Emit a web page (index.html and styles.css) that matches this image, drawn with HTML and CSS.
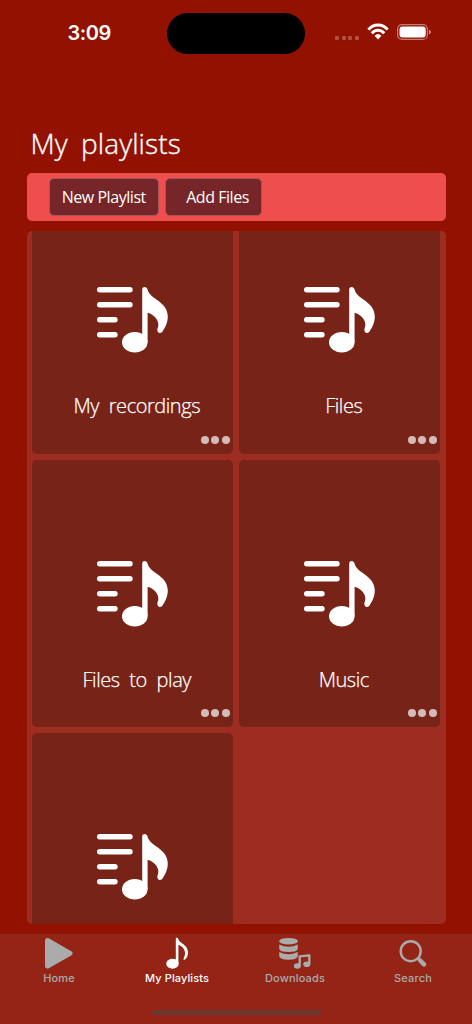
FILE: index.html
```html
<!DOCTYPE html>
<html lang="en">
<head>
<meta charset="utf-8">
<meta name="viewport" content="width=device-width, initial-scale=1">
<title>My playlists</title>
<link rel="stylesheet" href="styles.css">
</head>
<body>
<svg class="defs" aria-hidden="true">
  <symbol id="playlist" viewBox="0 0 72 68">
    <g fill="none" stroke="currentColor" stroke-width="5.4" stroke-linecap="round">
      <path d="M3.7 3.7H34M3.7 18.7H34M3.7 33.8H19M3.7 48.8H19"/>
    </g>
    <ellipse cx="38.8" cy="56.2" rx="12.8" ry="10.3" fill="currentColor"/>
    <path fill="currentColor" d="M46.2 3.5C46.2 .2 51 .2 51.6 3.8C54 13.500 71.800 15.500 71.800 30.500C71.800 37 69 41.500 66.500 45.500C64.500 48.500 60.500 46.500 61.500 42.400C64.500 37.500 60 29 51.600 26.800V56H46.200Z"/>
  </symbol>
</svg>
<div class="screen">
  <header class="status">
    <time class="clock">3:09</time>
    <div class="island"></div>
    <div class="indicators">
      <div class="signal"><i></i><i></i><i></i><i></i></div>
      <svg class="wifi" viewBox="0 0 22 17">
        <g fill="none" stroke="#fff" stroke-width="3">
          <path d="M1.400 6.600C6.500 .500 15.500 .500 20.600 6.600"/>
          <path d="M4.800 10.300C8.200 6.300 13.800 6.300 17.200 10.300"/>
        </g>
        <path fill="#fff" d="M7.500 12.700Q11 9.400 14.500 12.700L11 16.500Z"/>
      </svg>
      <svg class="battery" viewBox="0 0 34 16">
        <rect x=".6" y=".6" width="29.800" height="14.800" rx="4.500" fill="none" stroke="#fff" stroke-opacity=".45" stroke-width="1.200"/>
        <rect x="2.500" y="2.500" width="26.200" height="11" rx="3" fill="#fff"/>
        <path d="M32 5.500Q34 6.500 34 8T32 10.500Z" fill="#fff" fill-opacity=".5"/>
      </svg>
    </div>
  </header>
  <main class="content">
    <h1 class="title">My playlists</h1>
    <div class="toolbar">
      <button class="action new">New Playlist</button>
      <button class="action add">Add Files</button>
    </div>
    <section class="panel">
      <div class="grid">
        <article class="card"><svg class="art"><use href="#playlist"/></svg><h2 class="name">My recordings</h2><div class="more"><i></i><i></i><i></i></div></article>
        <article class="card"><svg class="art"><use href="#playlist"/></svg><h2 class="name">Files</h2><div class="more"><i></i><i></i><i></i></div></article>
        <article class="card"><svg class="art"><use href="#playlist"/></svg><h2 class="name">Files to play</h2><div class="more"><i></i><i></i><i></i></div></article>
        <article class="card"><svg class="art"><use href="#playlist"/></svg><h2 class="name">Music</h2><div class="more"><i></i><i></i><i></i></div></article>
        <article class="card"><svg class="art"><use href="#playlist"/></svg></article>
      </div>
    </section>
  </main>
  <nav class="tabs">
    <a class="tab">
      <svg class="tab-icon" viewBox="0 0 36 36"><path d="M6.500 5.500L29 18.300L6.500 31Z" fill="currentColor" stroke="currentColor" stroke-width="5" stroke-linejoin="round"/></svg>
      <span>Home</span>
    </a>
    <a class="tab active">
      <svg class="tab-icon" viewBox="0 0 36 36"><ellipse cx="13.500" cy="28.700" rx="6.200" ry="5" fill="currentColor"/><path fill="currentColor" d="M16.800 4C16.800 2.300 19 2.300 19.300 4C20 8.300 29 9.500 29 17.500C29 20.500 27.800 22.800 26 24.600C25 25.300 24 24.500 24.700 23.200C28 17.500 25.200 12 19.400 9.800V29H16.800Z"/></svg>
      <span>My Playlists</span>
    </a>
    <a class="tab">
      <svg class="tab-icon" viewBox="0 0 36 36"><g fill="currentColor"><ellipse cx="11.500" cy="6.200" rx="9.300" ry="3.300"/><path d="M2.200 9.500Q11.500 14 20.800 9.500V13.500Q20.800 17 11.500 17T2.200 13.500ZM2.200 17Q11.500 21.500 20.800 17V21Q20.500 24.700 11.500 24.700T2.200 21Z"/><ellipse cx="20.300" cy="31" rx="3.500" ry="2.800"/><ellipse cx="29.800" cy="29.200" rx="3.500" ry="2.800"/></g><path d="M22.700 31V21.300L32.300 20.300V29" fill="none" stroke="currentColor" stroke-width="2.300" stroke-linejoin="round"/></svg>
      <span>Downloads</span>
    </a>
    <a class="tab">
      <svg class="tab-icon" viewBox="0 0 36 36"><circle cx="15.700" cy="16.200" r="10" fill="none" stroke="currentColor" stroke-width="2.400"/><path d="M23 23.300L25 25.300" stroke="currentColor" stroke-width="2.400"/><path d="M25.200 25.500L29 29.300" stroke="currentColor" stroke-width="4.500" stroke-linecap="round"/></svg>
      <span>Search</span>
    </a>
    <div class="home-bar"></div>
  </nav>
</div>
</body>
</html>
```
FILE: styles.css
```css
* { box-sizing: border-box; }
body { margin: 0; background: #931100; color: #fff; font-family: "Open Sans", "Noto Sans", sans-serif; }
.defs { position: absolute; width: 0; height: 0; }
.screen { width: 472px; height: 1024px; display: flex; flex-direction: column; overflow: hidden; background: #931100; }
.status { height: 66px; flex: none; display: grid; grid-template-columns: 167px 138px 1fr; align-items: center; }
.clock { font: 600 20px/24px Inter, sans-serif; letter-spacing: -.45px; padding-left: 67.500px; }
.island { height: 41px; border-radius: 21px; background: #000; }
.indicators { display: flex; align-items: center; padding-left: 30px; height: 20px; margin-top: -3px; }
.signal { display: flex; gap: 2.700px; margin-top: 12px; }
.signal i { width: 4px; height: 4px; border-radius: 1.300px; background: #b25045; }
.wifi { width: 22px; height: 17px; margin-left: 7.500px; }
.battery { width: 34px; height: 16px; margin-left: 8px; }
.content { flex: none; height: 867px; padding: 57px 26.500px 0 26.500px; }
.title { margin: 0 0 0 4px; height: 50px; font: 300 28px/40px "Open Sans", sans-serif; -webkit-text-stroke: .35px #fff; letter-spacing: .1px; word-spacing: 6px; white-space: nowrap; }
.toolbar { height: 48px; border-radius: 5px; background: #ef4e4e; display: flex; gap: 6px; padding: 5px 0 0 22px; }
.action { height: 38px; padding: 0; border: 1px solid #a45456; border-radius: 5px; background: #762528; color: #fff; font: 400 16px/36px "Open Sans", sans-serif; letter-spacing: -.45px; white-space: nowrap; }
.new { width: 110.500px; }
.add { width: 97px; padding-left: 8px; }
.panel { height: 692.500px; margin-top: 10px; border-radius: 5px; overflow: hidden; background: #9d2d20; }
.grid { display: grid; grid-template-columns: 200.500px 200.500px; grid-auto-rows: 267.500px; gap: 6px 6.500px; margin: -45px 0 0 5.500px; }
.card { border-radius: 5px; background: #772318; display: flex; flex-direction: column; align-items: center; padding-top: 100px; }
.art { width: 72px; height: 68px; flex: none; color: #fff; }
.name { margin: 36px 0 0; padding-left: 9px; font: 300 20px/32px "Open Sans", sans-serif; -webkit-text-stroke: .25px #fff; letter-spacing: -.45px; white-space: nowrap; word-spacing: 5px; }
.more { display: flex; gap: 2.500px; align-self: flex-end; margin: 13.500px 3px 0 0; }
.more i { width: 8px; height: 8px; border-radius: 50%; background: #d5bbb8; }
.tabs { height: 91px; flex: none; border-top: 1px solid #811c10; background: #932416; display: grid; grid-template-columns: repeat(4, 118px); grid-template-rows: 52px 39px; }
.tab { color: #ababab; display: flex; flex-direction: column; align-items: center; padding-top: 1px; font: 500 11px/13px Inter, sans-serif; letter-spacing: .15px; white-space: nowrap; }
.tab-icon { width: 36px; height: 36px; margin-bottom: 1px; }
.active { color: #fff; letter-spacing: .1px; }
.home-bar { grid-column: 1 / -1; justify-self: center; width: 169px; height: 5px; margin-top: 23.500px; border-radius: 3px; background: #6b3932; }
```
